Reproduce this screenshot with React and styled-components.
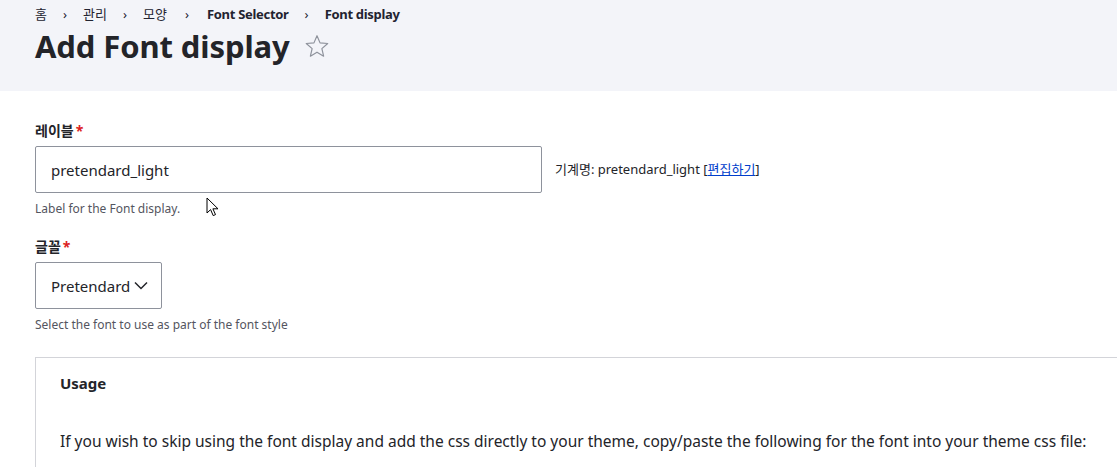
import React from 'react'
import styled, { createGlobalStyle } from 'styled-components'

const Global = createGlobalStyle`
  body {
    margin: 0;
    background: #fff;
    font-family: "Noto Sans", "Noto Sans CJK KR", sans-serif;
    color: #232429;
  }
`

const Header = styled.header`
  background: #f3f4f9;
  height: 91px;
  box-sizing: border-box;
  padding: 5px 35px 0;
`

const Crumbs = styled.nav`
  display: flex;
  align-items: center;
  font-size: 13px;
  line-height: 18px;
  color: #222330;
`

const Crumb = styled.span`
  font-weight: ${({ bold }) => (bold ? 700 : 400)};
  letter-spacing: ${({ bold }) => (bold ? '-0.3px' : '0')};
`

const Sep = styled.span`
  padding: 0 ${({ wide }) => (wide ? 18 : 16)}px;
  font-size: 13px;
  color: #222330;
`

const TitleRow = styled.div`
  display: flex;
  align-items: center;
  gap: 14px;
  margin-top: 3px;
`

const Title = styled.h1`
  margin: 0;
  font-size: 31px;
  line-height: 40px;
  font-weight: 700;
  letter-spacing: -0.1px;
  color: #232429;
`

const Main = styled.main`
  padding: 31px 35px 0;
`

const Item = styled.div`
  margin-bottom: ${({ gap }) => gap || 26}px;
`

const Label = styled.label`
  display: block;
  font-size: 14px;
  line-height: 18px;
  font-weight: 700;
  margin-bottom: 6px;

  &::after {
    content: '*';
    color: #dc2323;
    margin-left: 2px;
  }
`

const Row = styled.div`
  display: flex;
  align-items: center;
  gap: 13px;
`

const Input = styled.div`
  box-sizing: border-box;
  width: ${({ w }) => w}px;
  height: 47px;
  border: 1px solid #8e929c;
  border-radius: 2px;
  padding: 0 12px 0 15px;
  display: flex;
  align-items: center;
  font-size: 15px;
  color: #232429;
  background: #fff;
  white-space: nowrap;
`

const Chevron = styled.svg`
  margin-left: 4px;
  flex: none;
`

const Machine = styled.span`
  font-size: 13px;
  color: #232429;
  margin-top: -2px;

  a {
    color: #003ecc;
    text-decoration: underline;
  }
`

const Help = styled.div`
  margin-top: 8px;
  font-size: 12px;
  line-height: 16px;
  color: #545560;
`

const Details = styled.section`
  border: 1px solid #d3d4d9;
  border-right: none;
  border-bottom: none;
  margin-right: -35px;
  padding: 16px 24px 0;
  min-height: 100px;
`

const Summary = styled.div`
  font-size: 15px;
  font-weight: 700;
  color: #232429;
  line-height: 18px;
`

const Para = styled.p`
  margin: 39px 0 0;
  font-size: 15.5px;
  line-height: 20px;
  color: #232429;
`

const Cursor = styled.svg`
  position: absolute;
  left: 206px;
  top: 197px;
`

export default function App() {
  return (
    <>
      <Global />
      <Header>
        <Crumbs>
          <Crumb>홈</Crumb>
          <Sep>›</Sep>
          <Crumb>관리</Crumb>
          <Sep>›</Sep>
          <Crumb>모양</Crumb>
          <Sep wide>›</Sep>
          <Crumb bold>Font Selector</Crumb>
          <Sep>›</Sep>
          <Crumb bold>Font display</Crumb>
        </Crumbs>
        <TitleRow>
          <Title>Add Font display</Title>
          <svg width="26" height="26" viewBox="0 0 24 24">
            <path
              d="M12 2.5l2.8 6.6 7.1.6-5.4 4.7 1.6 7-6.1-3.7-6.1 3.7 1.6-7L2.1 9.7l7.1-.6z"
              fill="none"
              stroke="#8e929c"
              strokeWidth="1.1"
              strokeLinejoin="round"
            />
          </svg>
        </TitleRow>
      </Header>
      <Main>
        <Item gap={21}>
          <Label>레이블</Label>
          <Row>
            <Input w={507}>pretendard_light</Input>
            <Machine>
              기계명: pretendard_light [<a href="#">편집하기</a>]
            </Machine>
          </Row>
          <Help>Label for the Font display.</Help>
        </Item>
        <Item gap={24}>
          <Label>글꼴</Label>
          <Input w={127}>
            Pretendard
            <Chevron width="14" height="9" viewBox="0 0 14 9">
              <path d="M1 1.5l6 6 6-6" fill="none" stroke="#232429" strokeWidth="1.5" />
            </Chevron>
          </Input>
          <Help>Select the font to use as part of the font style</Help>
        </Item>
        <Details>
          <Summary>Usage</Summary>
          <Para>
            If you wish to skip using the font display and add the css directly to your theme,
            copy/paste the following for the font into your theme css file:
          </Para>
        </Details>
      </Main>
      <Cursor width="13" height="20" viewBox="0 0 13 20">
        <path d="M1 1v15l3.6-3.4 2.6 6 2.3-1-2.6-5.8H12z" fill="#fff" stroke="#000" strokeWidth="1" strokeLinejoin="round" />
      </Cursor>
    </>
  )
}
